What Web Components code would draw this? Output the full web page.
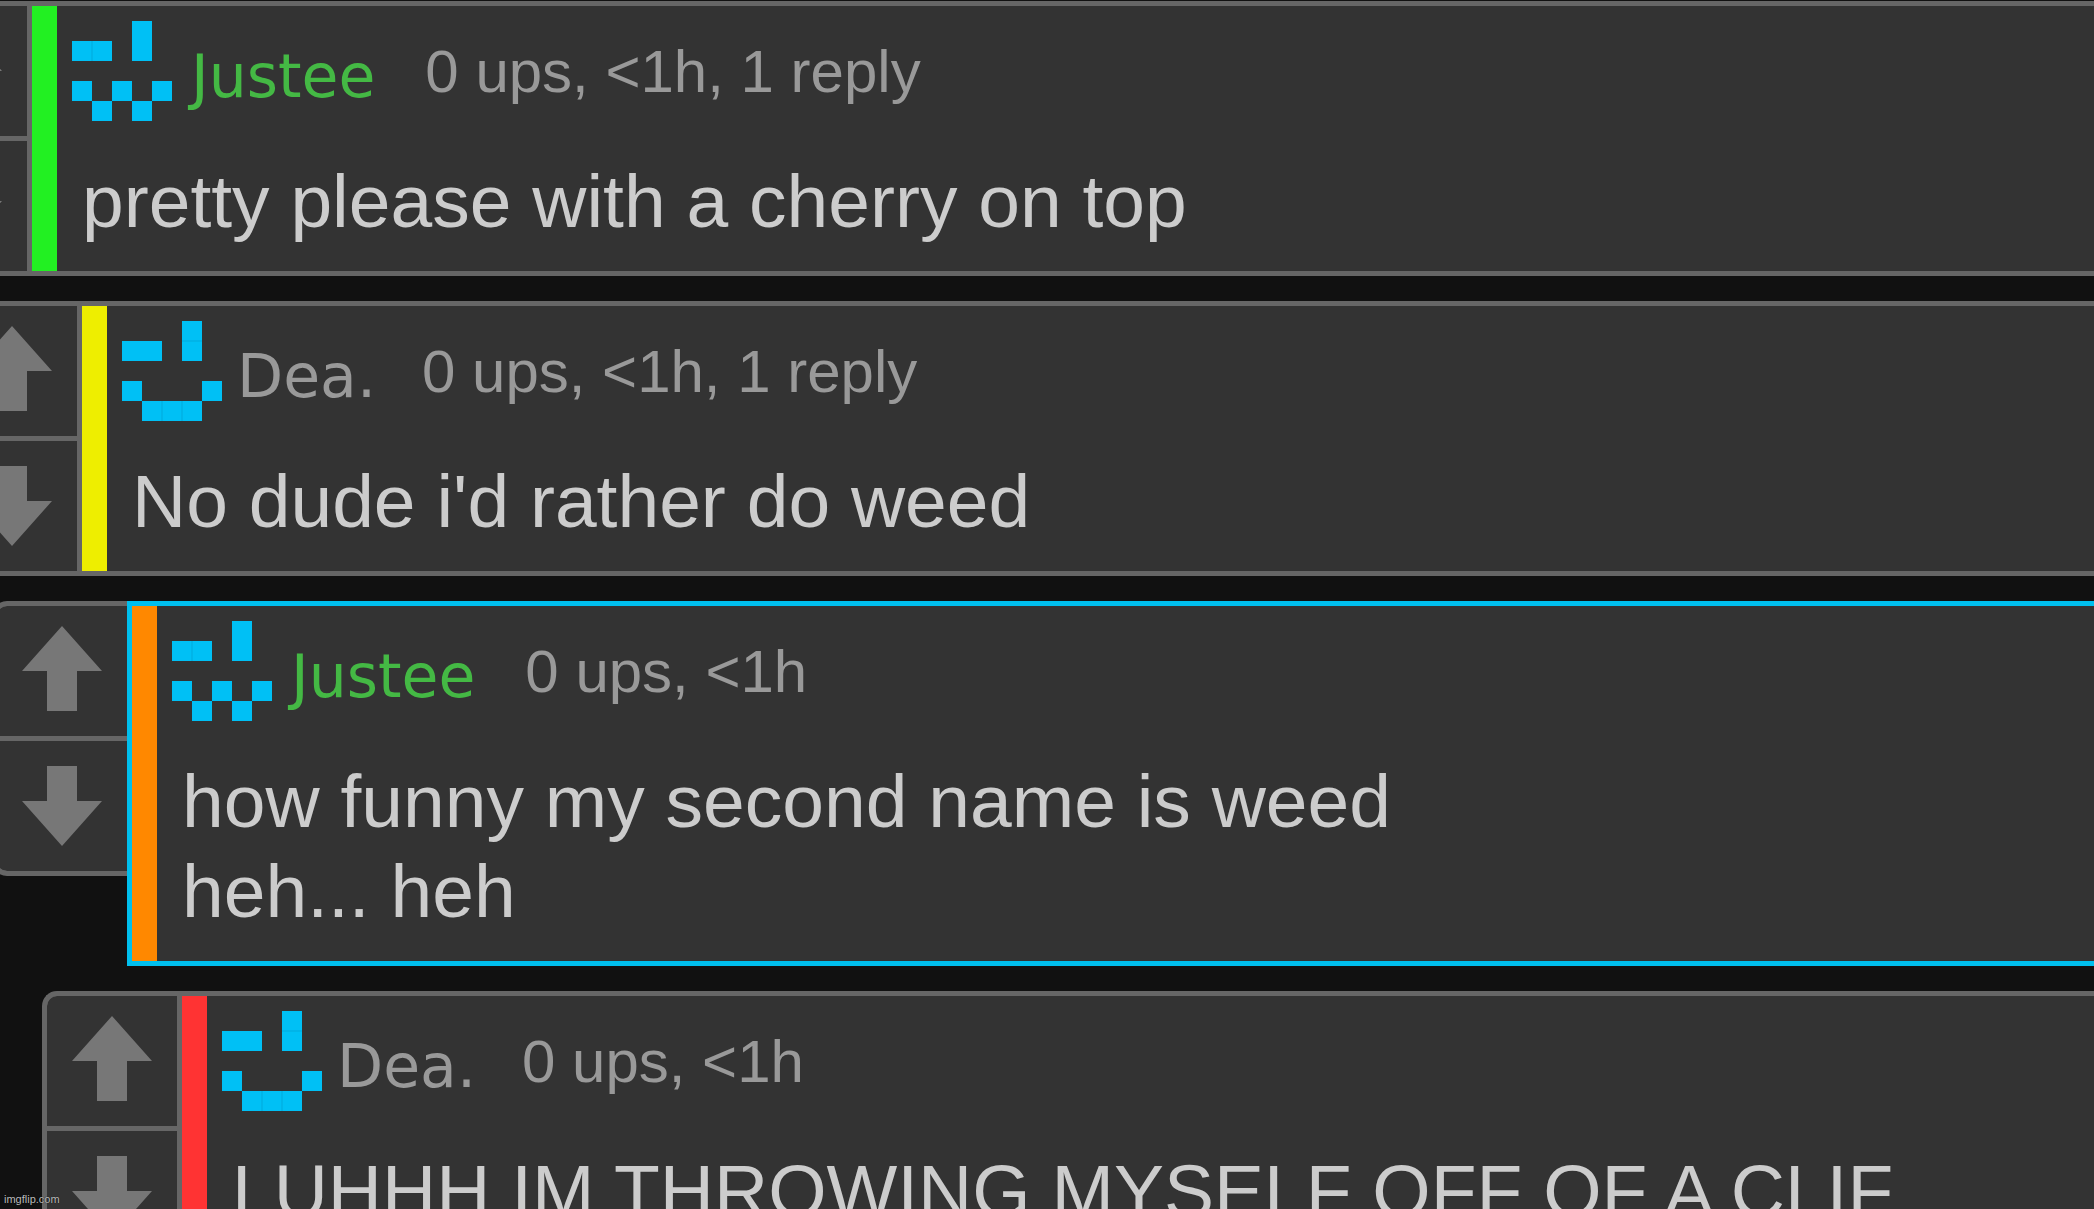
<!DOCTYPE html>
<html lang="en">
<head>
<meta charset="utf-8">
<title>Comments</title>
<style>
  html, body { height: 100%; }
  body {
    margin: 0;
    overflow: hidden;
    background: #111;
    color: #ccc;
    font-family: "Liberation Sans", Arial, sans-serif;
  }
</style>
</head>
<body>
<comment-thread>
  <user-comment depth="0" bar="#22f022" name="Justee" tone="green" meta="0 ups, &lt;1h, 1 reply">pretty please with a cherry on top</user-comment>
  <user-comment depth="1" bar="#eeee00" name="Dea." meta="0 ups, &lt;1h, 1 reply">No dude i'd rather do weed</user-comment>
  <user-comment depth="2" bar="#ff8800" name="Justee" tone="green" meta="0 ups, &lt;1h" selected>how funny my second name is weed<br>heh... heh</user-comment>
  <user-comment depth="3" bar="#ff3333" name="Dea." meta="0 ups, &lt;1h">LUHHH IM THROWING MYSELF OFF OF A CLIF</user-comment>
</comment-thread>
<site-mark>imgflip.com</site-mark>

<script>
class CommentThread extends HTMLElement {
  constructor() {
    super();
    this.attachShadow({ mode: "open" }).innerHTML = `
      <style>
        :host { display: flex; flex-direction: column; gap: 25px; height: 100%; box-sizing: border-box; padding-top: 1px; overflow: hidden; }
        ::slotted(*) { flex: none; }
      </style>
      <slot></slot>`;
  }
}

class VoteBox extends HTMLElement {
  constructor() {
    super();
    this.attachShadow({ mode: "open" }).innerHTML = `
      <style>
        :host {
          display: flex; flex-direction: column; gap: 5px; flex: none;
          width: 130px; overflow: hidden;
          border: 5px solid #666; border-right: 0;
          border-radius: 15px 0 0 15px; background: #666;
        }
        button {
          display: flex; justify-content: center; align-items: flex-start;
          height: 130px; margin: 0; padding: 20px 0 0; border: 0;
          background: #333; cursor: pointer;
        }
        button:first-of-type { border-top-left-radius: 10px; }
        button:last-of-type { border-bottom-left-radius: 10px; }
        svg { display: block; fill: #777; }
      </style>
      <button aria-label="Upvote"><svg width="80" height="85" viewBox="0 0 80 85"><path d="M40 0L80 45H55V85H25V45H0Z"/></svg></button>
      <button aria-label="Downvote"><svg width="80" height="85" viewBox="0 0 80 85"><path d="M25 5H55V40H80L40 85L0 40H25Z"/></svg></button>`;
  }
}

class UserIcon extends HTMLElement {
  static get observedAttributes() { return ["face"]; }
  constructor() {
    super();
    this.attachShadow({ mode: "open" });
  }
  attributeChangedCallback() {
    const wavy = this.getAttribute("face") === "wavy";
    const cells = wavy
      ? [[3,0],[0,1],[1,1],[3,1],[0,3],[2,3],[4,3],[1,4],[3,4]]
      : [[3,0],[0,1],[1,1],[3,1],[0,3],[4,3],[1,4],[2,4],[3,4]];
    const seams = wavy ? "M20 20V40" : "M60 20H80M40 80V100M60 80V100";
    this.shadowRoot.innerHTML = `
      <style>
        :host { display: block; flex: none; width: 100px; height: 100px; }
        svg { display: block; fill: #00c0f5; }
        path { stroke: #00a9dc; }
      </style>
      <svg width="100" height="100" viewBox="0 0 100 100" aria-hidden="true">
        ${cells.map(([x, y]) => `<rect x="${x * 20}" y="${y * 20}" width="20" height="20"/>`).join("")}
        <path d="${seams}"/>
      </svg>`;
  }
}

class UserComment extends HTMLElement {
  constructor() {
    super();
    this.attachShadow({ mode: "open" }).innerHTML = `
      <style>
        :host { display: flex; align-items: flex-start; }
        article {
          flex: 1; min-width: 0;
          padding: 15px 15px 25px 40px;
          border: 5px solid #666; border-right: 0;
          background: linear-gradient(var(--bar), var(--bar)) left / 25px 100% no-repeat #333;
        }
        :host([selected]) article { border-color: #00bfee; }
        header { display: flex; align-items: flex-start; height: 100px; font-size: 60px; line-height: 70px; color: #999; white-space: nowrap; }
        a {
          margin: 20px 46px 0 15px;
          color: #999; text-decoration: none;
          font-family: Verdana, "DejaVu Sans", sans-serif;
        }
        :host([tone="green"]) a { color: #44b944; padding: 0 4px; }
        .meta { margin-top: 16px; }
        p { margin: 35px 0 0 10px; font-size: 75px; line-height: 90px; }
      </style>
      <vote-box></vote-box>
      <article>
        <header><user-icon></user-icon><a href="#"></a><span class="meta"></span></header>
        <p><slot></slot></p>
      </article>`;
  }
  connectedCallback() {
    const root = this.shadowRoot;
    const depth = Number(this.getAttribute("depth"));
    this.style.marginLeft = `${depth * 50 - 108}px`;
    this.style.setProperty("--bar", this.getAttribute("bar"));
    root.querySelector("user-icon").setAttribute("face", this.getAttribute("tone") === "green" ? "wavy" : "smile");
    root.querySelector("a").textContent = this.getAttribute("name");
    root.querySelector(".meta").textContent = this.getAttribute("meta");
  }
}

class SiteMark extends HTMLElement {
  constructor() {
    super();
    this.attachShadow({ mode: "open" }).innerHTML = `
      <style>
        :host { display: block; position: absolute; left: 4px; bottom: 3px; font-size: 11px; line-height: 13px; color: #bbb; text-shadow: 0 0 1px #000; }
      </style>
      <slot></slot>`;
  }
}

customElements.define("vote-box", VoteBox);
customElements.define("user-icon", UserIcon);
customElements.define("user-comment", UserComment);
customElements.define("comment-thread", CommentThread);
customElements.define("site-mark", SiteMark);
</script>
</body>
</html>
